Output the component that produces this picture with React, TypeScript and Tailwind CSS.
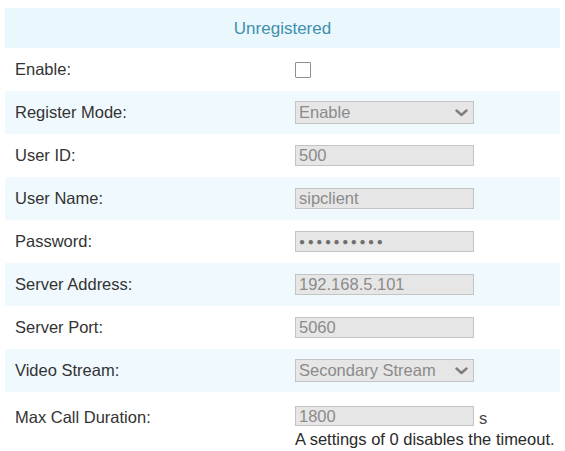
const fields: { label: string; kind: "check" | "select" | "input"; value?: string; tone?: boolean }[] = [
  { label: "Enable:", kind: "check" },
  { label: "Register Mode:", kind: "select", value: "Enable", tone: true },
  { label: "User ID:", kind: "input", value: "500" },
  { label: "User Name:", kind: "input", value: "sipclient", tone: true },
  { label: "Password:", kind: "input", value: "●●●●●●●●●●" },
  { label: "Server Address:", kind: "input", value: "192.168.5.101", tone: true },
  { label: "Server Port:", kind: "input", value: "5060" },
  { label: "Video Stream:", kind: "select", value: "Secondary Stream", tone: true },
];

function Chevron() {
  return (
    <svg className="w-[13px] h-[8px]" viewBox="0 0 13 8" fill="none">
      <path d="M1.5 1.5 6.5 6 11.5 1.5" stroke="#7f7f7f" strokeWidth="2.4" strokeLinecap="round" strokeLinejoin="round" />
    </svg>
  );
}

function Control({ kind, value }: { kind: string; value?: string }) {
  if (kind === "check") {
    return <div className="w-[16px] h-[16px] border border-[#8f8f8f] bg-white rounded-[1px]" />;
  }
  if (kind === "select") {
    return (
      <div className="w-[179px] h-[23px] border border-[#c4c4c4] bg-[#e6e6e6] flex items-center justify-between pl-[3px] pr-[5px] text-[#8b8b8b]">
        <span>{value}</span>
        <Chevron />
      </div>
    );
  }
  const isPwd = value?.startsWith("●");
  return (
    <div
      className={`w-[179px] h-[21px] border border-[#c4c4c4] bg-[#e6e6e6] flex items-center pl-[3px] ${
        isPwd ? "text-[10px] tracking-[2.6px] text-[#6f6f6f]" : "text-[#8b8b8b]"
      }`}
    >
      {value}
    </div>
  );
}

export default function App() {
  return (
    <div className="w-[565px] h-[451px] bg-white overflow-hidden pt-[8px] pl-[5px] text-[16.5px] leading-none font-['Liberation_Sans',Arial,sans-serif]">
      <div className="w-[555px]">
        <div className="h-[40px] bg-[#eaf7fc] flex items-center justify-center text-[17px] text-[#3f8fae]">Unregistered</div>
        {fields.map((f) => (
          <div key={f.label} className={`h-[43px] flex items-center ${f.tone ? "bg-[#f0f9fd]" : "bg-white"}`}>
            <div className="w-[290px] pl-[10px] text-[#333]">{f.label}</div>
            <Control kind={f.kind} value={f.value} />
          </div>
        ))}
        <div className="flex pt-[14px]">
          <div className="w-[290px] pl-[10px] text-[#333] pt-[3px]">Max Call Duration:</div>
          <div className="flex flex-col">
            <div className="flex items-end gap-[5px]">
              <div className="w-[179px] h-[20px] border border-[#c4c4c4] bg-[#e6e6e6] flex items-center pl-[3px] text-[#8b8b8b]">
                1800
              </div>
              <span className="text-[#444]">s</span>
            </div>
            <div className="mt-[5px] text-[#2a2a2a]">A settings of 0 disables the timeout.</div>
          </div>
        </div>
      </div>
    </div>
  );
}
